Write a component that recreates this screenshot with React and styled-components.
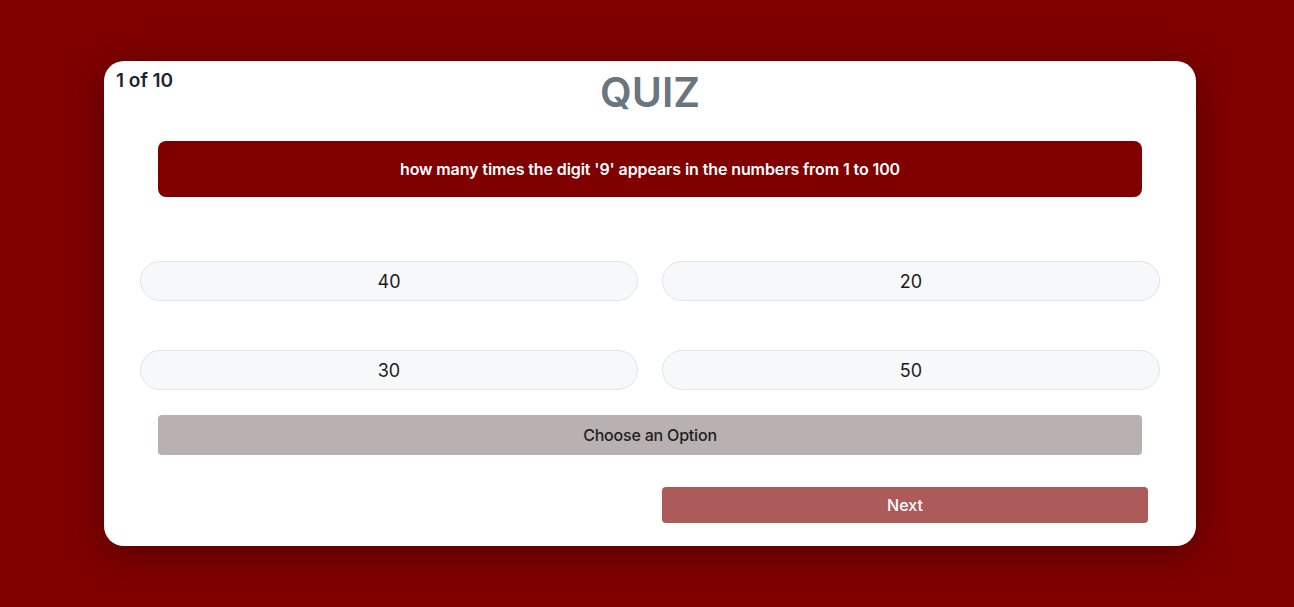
import React, { useState } from "react";
import styled, { createGlobalStyle } from "styled-components";

const questions = [
  {
    text: "how many times the digit '9' appears in the numbers from 1 to 100",
    options: ["40", "20", "30", "50"],
  },
];

const GlobalStyle = createGlobalStyle`
  html, body {
    margin: 0;
    padding: 0;
    background: #800000;
    font-family: "Inter", "Noto Sans", sans-serif;
  }
  #root {
    min-height: 607px;
    overflow: hidden;
  }
`;

const Card = styled.div`
  position: relative;
  box-sizing: border-box;
  width: 1092px;
  height: 485px;
  margin: 61px 0 0 104px;
  padding: 5px 36px 0;
  background: #fff;
  border-radius: 20px;
  box-shadow: 0 6px 36px rgba(0, 0, 0, 0.35);
  display: flex;
  flex-direction: column;
`;

const Counter = styled.span`
  position: absolute;
  top: 8px;
  left: 12px;
  font-size: 19px;
  font-weight: 600;
  color: #1f2430;
  letter-spacing: 0;
`;

const Title = styled.h1`
  margin: 0;
  text-align: center;
  font-size: 41px;
  line-height: 52px;
  font-weight: 600;
  color: #6b7580;
  letter-spacing: 0;
`;

const Question = styled.div`
  margin: 23px 18px 0;
  height: 56px;
  display: flex;
  align-items: center;
  justify-content: center;
  background: #800000;
  border-radius: 8px;
  color: #fff;
  font-size: 16px;
  font-weight: 600;
  letter-spacing: -0.1px;
`;

const Options = styled.div`
  display: grid;
  grid-template-columns: 1fr 1fr;
  column-gap: 24px;
  row-gap: 49px;
  margin-top: 64px;
`;

const Option = styled.button`
  height: 40px;
  border: 1px solid #e1e4e9;
  border-radius: 20px;
  background: #f7f8fa;
  font-family: inherit;
  font-size: 18px;
  color: #1c1c1c;
  cursor: pointer;
`;

const Status = styled.div`
  margin: 25px 18px 0;
  height: 40px;
  display: flex;
  align-items: center;
  justify-content: center;
  background: #b9b0b1;
  border-radius: 4px;
  font-size: 16px;
  font-weight: 500;
  color: #222;
  letter-spacing: -0.2px;
`;

const Footer = styled.div`
  display: grid;
  grid-template-columns: 1fr 1fr;
  column-gap: 24px;
  margin-top: 32px;
`;

const NextButton = styled.button`
  grid-column: 2;
  width: 486px;
  height: 36px;
  border: none;
  border-radius: 4px;
  background: #ad5a5a;
  color: #fff;
  font-family: inherit;
  font-size: 16px;
  font-weight: 500;
  cursor: pointer;
`;

const App = () => {
  const [current] = useState(0);
  const [picked, setPicked] = useState(null);
  const q = questions[current];

  return (
    <>
      <GlobalStyle />
      <Card>
        <Counter>
          {current + 1} of 10
        </Counter>
        <Title>QUIZ</Title>
        <Question>{q.text}</Question>
        <Options>
          {q.options.map((opt, index) => (
            <Option key={index} onClick={() => setPicked(index)}>
              {opt}
            </Option>
          ))}
        </Options>
        <Status>{picked === null ? "Choose an Option" : "Option selected"}</Status>
        <Footer>
          <NextButton>Next</NextButton>
        </Footer>
      </Card>
    </>
  );
};

export default App;
